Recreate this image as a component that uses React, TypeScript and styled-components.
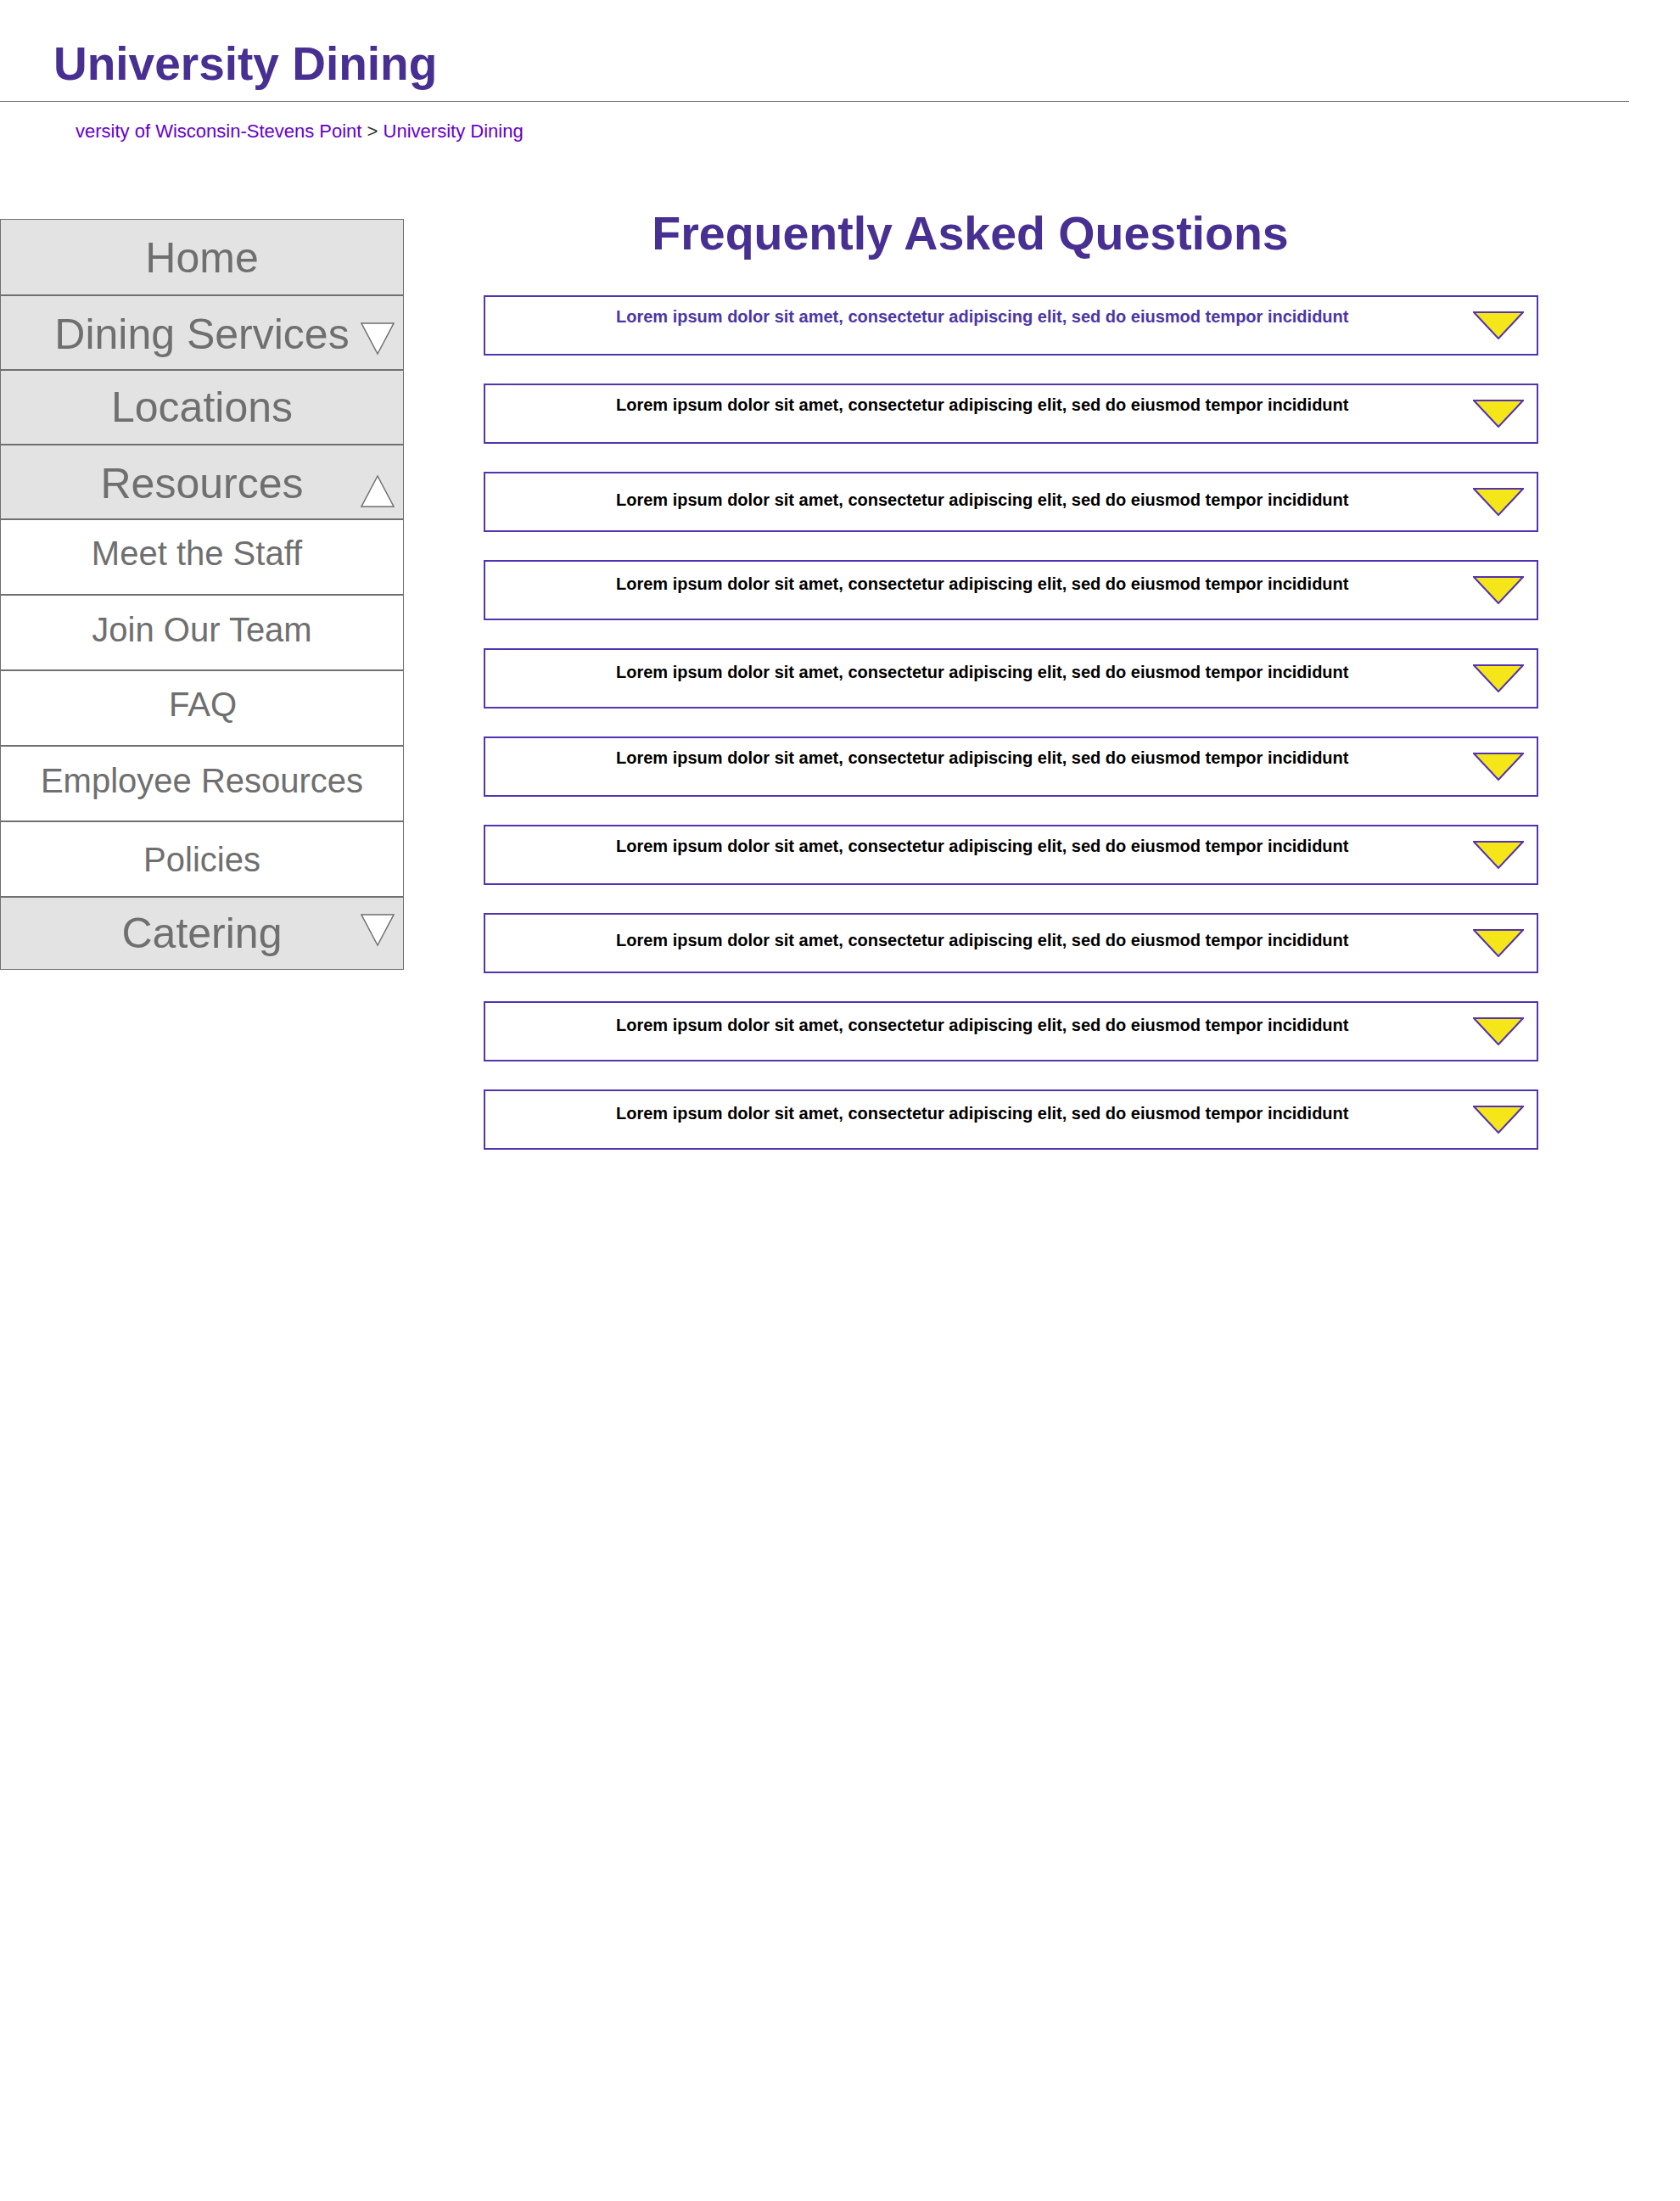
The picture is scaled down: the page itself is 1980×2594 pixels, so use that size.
import React from "react";
import styled, { createGlobalStyle } from "styled-components";

const GlobalStyle = createGlobalStyle`
  html, body { margin: 0; padding: 0; background: #ffffff; }
  body { font-family: "Liberation Sans", Arial, Helvetica, sans-serif; }
  #root { min-height: 2594px; }
  * { box-sizing: border-box; }
`;

const Page = styled.div`
  width: 1980px;
`;

const Header = styled.header`
  padding-top: 48px;
`;

const SiteTitle = styled.h1`
  margin: 0 0 0 63px;
  font-size: 55px;
  line-height: 55px;
  font-weight: 700;
  color: #482f92;
`;

const Rule = styled.hr`
  margin: 16px 0 0 0;
  width: 1920px;
  height: 1px;
  border: 0;
  background: #6f6f6f;
`;

const Breadcrumb = styled.nav`
  margin-top: 24px;
  padding-left: 89px;
  font-size: 22px;
  line-height: 22px;
  color: #333333;
  white-space: nowrap;
`;

const Crumb = styled.a`
  color: #6600cc;
  text-decoration: none;
`;

const Body = styled.div`
  display: flex;
  align-items: flex-start;
  margin-top: 82px;
`;

const Sidebar = styled.nav`
  width: 476px;
  margin-top: 10px;
  border: 1px solid #707070;
  display: flex;
  flex-direction: column;
`;

const NavRow = styled.div<{ $variant: "main" | "sub" }>`
  position: relative;
  flex: none;
  height: ${(p) => (p.$variant === "main" ? 88 : 89)}px;
  background: ${(p) => (p.$variant === "main" ? "#e3e3e3" : "#ffffff")};
  display: flex;
  align-items: center;
  justify-content: center;
  &:not(:first-child) {
    border-top: 2px solid #707070;
  }
  &:last-child {
    height: 86px;
  }
`;

const NavLabel = styled.span<{ $variant: "main" | "sub"; $dx: number; $dy: number }>`
  position: relative;
  left: ${(p) => p.$dx}px;
  top: ${(p) => p.$dy}px;
  font-size: ${(p) => (p.$variant === "main" ? 50 : 40)}px;
  line-height: 1;
  color: #6f6f6f;
  white-space: nowrap;
`;

const CaretIcon = styled.svg<{ $top: number }>`
  position: absolute;
  right: 10px;
  top: ${(p) => p.$top}px;
  width: 40px;
  height: 40px;
`;

const Main = styled.main`
  width: 1335px;
  display: flex;
  flex-direction: column;
`;

const Heading = styled.h2`
  margin: 0;
  text-align: center;
  font-size: 55.5px;
  line-height: 55px;
  font-weight: 700;
  color: #482f92;
`;

const FaqList = styled.div`
  margin: 45px 0 0 94px;
  width: 1243px;
  display: flex;
  flex-direction: column;
  gap: 33px;
`;

const FaqItem = styled.div`
  height: 71px;
  border: 2px solid #5233b0;
  display: flex;
  align-items: flex-start;
  padding: 0 15px 0 154px;
`;

const FaqText = styled.div<{ $active?: boolean; $offset: number }>`
  flex: 1;
  padding-top: ${(p) => 13 + p.$offset}px;
  font-size: 20px;
  line-height: 20px;
  font-weight: 700;
  color: ${(p) => (p.$active ? "#4c36a6" : "#000000")};
  white-space: nowrap;
`;

const ArrowIcon = styled.svg`
  margin-top: 17px;
  width: 60px;
  height: 33px;
  flex: none;
`;

type Caret = { dir: "down" | "up"; top: number };
type NavItem = {
  label: string;
  variant: "main" | "sub";
  dx?: number;
  dy: number;
  caret?: Caret;
};

const navItems: NavItem[] = [
  { label: "Home", variant: "main", dy: 1 },
  { label: "Dining Services", variant: "main", dy: 2, caret: { dir: "down", top: 30 } },
  { label: "Locations", variant: "main", dy: 0 },
  { label: "Resources", variant: "main", dy: 2, caret: { dir: "up", top: 34 } },
  { label: "Meet the Staff", variant: "sub", dx: -6, dy: -5 },
  { label: "Join Our Team", variant: "sub", dy: -4 },
  { label: "FAQ", variant: "sub", dx: 1, dy: -5 },
  { label: "Employee Resources", variant: "sub", dy: -4 },
  { label: "Policies", variant: "sub", dy: 0 },
  { label: "Catering", variant: "main", dy: 0, caret: { dir: "down", top: 18 } },
];

const LOREM =
  "Lorem ipsum dolor sit amet, consectetur adipiscing elit, sed do eiusmod tempor incididunt";

const faqOffsets = [0, 0, 8, 3, 3, 0, 0, 7, 3, 3];

function Caret({ dir, top }: Caret) {
  const points = dir === "down" ? "1,2 39,2 20,38" : "20,2 39,38 1,38";
  return (
    <CaretIcon $top={top} viewBox="0 0 40 40">
      <polygon points={points} fill="#ffffff" stroke="#6f6f6f" strokeWidth="1.5" />
    </CaretIcon>
  );
}

export default function App() {
  return (
    <Page>
      <GlobalStyle />
      <Header>
        <SiteTitle>University Dining</SiteTitle>
        <Rule />
        <Breadcrumb>
          <Crumb href="#">versity of Wisconsin-Stevens Point</Crumb> &gt;{" "}
          <Crumb href="#">University Dining</Crumb>
        </Breadcrumb>
      </Header>
      <Body>
        <Sidebar>
          {navItems.map((item) => (
            <NavRow key={item.label} $variant={item.variant}>
              <NavLabel $variant={item.variant} $dx={item.dx ?? 0} $dy={item.dy}>
                {item.label}
              </NavLabel>
              {item.caret && <Caret {...item.caret} />}
            </NavRow>
          ))}
        </Sidebar>
        <Main>
          <Heading>Frequently Asked Questions</Heading>
          <FaqList>
            {faqOffsets.map((off, i) => (
              <FaqItem key={i}>
                <FaqText $active={i === 0} $offset={off}>
                  {LOREM}
                </FaqText>
                <ArrowIcon viewBox="0 0 60 33">
                  <polygon
                    points="1,1 59,1 30,32"
                    fill="#f5e619"
                    stroke="#5233b0"
                    strokeWidth="2"
                  />
                </ArrowIcon>
              </FaqItem>
            ))}
          </FaqList>
        </Main>
      </Body>
    </Page>
  );
}
